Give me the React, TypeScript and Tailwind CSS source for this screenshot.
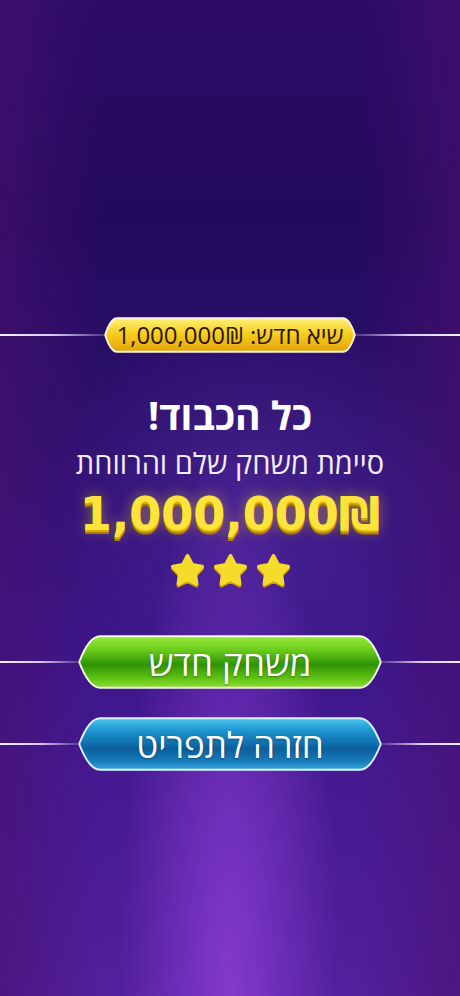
import { useId } from 'react';

type Tone = 'gold' | 'green' | 'blue';

const tones: Record<Tone, { stops: [string, string][]; stroke: string }> = {
  gold: {
    stops: [['0', '#fff07a'], ['0.45', '#f7cf1e'], ['1', '#e3a10a']],
    stroke: '#fff6d8',
  },
  green: {
    stops: [['0', '#9ae83e'], ['0.25', '#6fcf1c'], ['0.55', '#2f9406'], ['0.8', '#5cbf14'], ['1', '#8ede30']],
    stroke: '#f2fbe8',
  },
  blue: {
    stops: [['0', '#4cc6ee'], ['0.25', '#1d93cf'], ['0.6', '#0b5e9c'], ['0.85', '#1a7fbf'], ['1', '#3aa9de']],
    stroke: '#d9f3ff',
  },
};

// hexagon-ish pill: pointed ends, rounded into the top/bottom edges
function PillShape({ w, h, d, tone }: { w: number; h: number; d: number; tone: Tone }) {
  const id = useId().replace(/:/g, '');
  const i = 1.2;
  const m = h / 2;
  const path = `M ${i} ${m} Q ${d * 0.5} ${i} ${d} ${i} L ${w - d} ${i} Q ${w - d * 0.5} ${i} ${w - i} ${m} Q ${w - d * 0.5} ${h - i} ${w - d} ${h - i} L ${d} ${h - i} Q ${d * 0.5} ${h - i} ${i} ${m} Z`;
  const t = tones[tone];
  return (
    <svg width={w} height={h} viewBox={`0 0 ${w} ${h}`} className="absolute inset-0">
      <defs>
        <linearGradient id={`g${id}`} x1="0" y1="0" x2="0" y2="1">
          {t.stops.map(([o, c]) => (
            <stop key={o} offset={o} stopColor={c} />
          ))}
        </linearGradient>
      </defs>
      <path d={path} fill={`url(#g${id})`} stroke={t.stroke} strokeWidth={2} strokeLinejoin="round" />
    </svg>
  );
}

function LineRow({ children }: { children: React.ReactNode }) {
  return (
    <div className="flex w-full items-center">
      <div className="h-[2px] flex-1 bg-gradient-to-r from-[#8e6cc8]/40 via-[#d9cdf2] to-[#f4efff]" />
      {children}
      <div className="h-[2px] flex-1 bg-gradient-to-l from-[#8e6cc8]/40 via-[#d9cdf2] to-[#f4efff]" />
    </div>
  );
}

function Star() {
  const p = 'M12 2.5 L15.06 8.29 L21.51 9.41 L16.95 14.11 L17.88 20.59 L12 17.7 L6.12 20.59 L7.05 14.11 L2.49 9.41 L8.94 8.29 Z';
  return (
    <svg width="37" height="37" viewBox="0 0 24 24">
      <path d={p} transform="translate(0 1.2)" fill="#c99c06" stroke="#c99c06" strokeWidth="2.4" strokeLinejoin="round" />
      <path d={p} fill="#f6dc2a" stroke="#f6dc2a" strokeWidth="2.4" strokeLinejoin="round" />
    </svg>
  );
}

function GameButton({ label, tone }: { label: string; tone: Tone }) {
  return (
    <LineRow>
      <button className="relative flex h-[54px] w-[304px] items-center justify-center">
        <PillShape w={304} h={54} d={22} tone={tone} />
        <span className="relative text-[35px] leading-none text-white [text-shadow:0_1px_2px_rgba(0,0,0,0.35)]">
          {label}
        </span>
      </button>
    </LineRow>
  );
}

export default function App() {
  return (
    <div
      dir="rtl"
      className="relative h-[996px] w-full overflow-hidden bg-[radial-gradient(ellipse_24%_55%_at_50%_100%,rgba(140,62,214,0.85),transparent),radial-gradient(circle_at_56%_50%,rgba(112,66,196,0.3),transparent_36%),linear-gradient(to_right,rgba(72,16,112,0.6),transparent_22%,transparent_78%,rgba(72,16,112,0.6)),linear-gradient(to_bottom,#2c0c66_0%,#230a5c_22%,#2e1170_45%,#3d168a_65%,#52209c_100%)] font-['Open_Sans','DejaVu_Sans',sans-serif]"
    >
      <div className="flex flex-col items-center pt-[317px]">
        <LineRow>
          <div className="relative flex h-[36px] w-[252px] items-center justify-center">
            <PillShape w={252} h={36} d={13} tone="gold" />
            <span className="relative text-[24px] leading-none text-[#2a1600]">שיא חדש: 1,000,000₪</span>
          </div>
        </LineRow>

        <h1 className="mt-[37px] text-[39px] font-bold leading-[50px] text-white">כל הכבוד!</h1>
        <p className="mt-[4px] text-[29px] leading-[38px] text-[#f3eefc]">סיימת משחק שלם והרווחת</p>
        <div
          dir="ltr"
          className="mt-[7px] font-['DejaVu_Sans',sans-serif] text-[46px] font-bold leading-[50px] text-[#fde43a] [text-shadow:0_2px_0_#dcaa04,0_4px_0_#a97c02,0_0_14px_rgba(255,226,40,0.45)]"
        >
          1,000,000₪
        </div>
        <div className="mt-[13px] flex gap-[6px]">
          <Star />
          <Star />
          <Star />
        </div>

        <div className="mt-[46px] w-full">
          <GameButton label="משחק חדש" tone="green" />
        </div>
        <div className="mt-[28px] w-full">
          <GameButton label="חזרה לתפריט" tone="blue" />
        </div>
      </div>
    </div>
  );
}
